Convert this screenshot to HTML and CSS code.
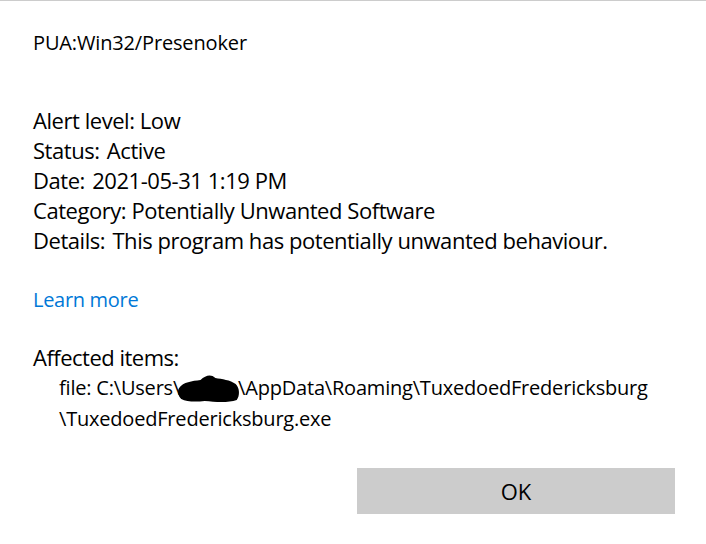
FILE: index.html
```html
<!DOCTYPE html>
<html lang="en">
<head>
  <meta charset="utf-8">
  <link rel="stylesheet" href="styles.css">
</head>
<body>
  <div class="dialog">
    <div class="threat-name">PUA:Win32/Presenoker</div>

    <div class="details">
      <div>Alert level: Low</div>
      <div><span class="label">Status:</span> Active</div>
      <div><span class="label">Date:</span> 2021-05-31 1:19 PM</div>
      <div>Category: Potentially Unwanted Software</div>
      <div><span class="label">Details:</span> This program has potentially unwanted behaviour.</div>
    </div>

    <a class="learn-more" href="#">Learn more</a>

    <div class="affected">
      <div>Affected items:</div>
      <div class="item">
        <div>file: C:\Users\<svg class="redact" viewBox="0 0 60 32" width="64" height="32" preserveAspectRatio="none"><path d="M2 16 C6 10 14 9 22 8 C27 3 32 2 36 6 C42 7 50 8 55 12 C59 16 59 24 56 28 C48 31 36 30 26 29 C18 30 9 30 4 27 C1 24 0 19 2 16 Z" fill="#000"/></svg>\AppData\Roaming\TuxedoedFredericksburg</div>
        <div>\TuxedoedFredericksburg.exe</div>
      </div>
    </div>

    <div class="actions">
      <button class="ok-button" type="button">OK</button>
    </div>
  </div>
</body>
</html>
```

FILE: styles.css
```css
body {
  margin: 0;
  background: #fff;
  font-family: "Open Sans", "Noto Sans", sans-serif;
  color: #000;
}
.dialog {
  border-top: 1px solid #cccccc;
  height: 543px;
  padding: 0 31px 0 33px;
}
.threat-name {
  font-size: 20px;
  margin-top: 29px;
  line-height: 26px;
  letter-spacing: -0.15px;
}
.details {
  margin-top: 49px;
  font-size: 22px;
  line-height: 30px;
  letter-spacing: -0.45px;
}
.label {
  margin-right: 2px;
}
.learn-more {
  display: block;
  margin-top: 30px;
  font-size: 20px;
  line-height: 30px;
  color: #0078d7;
  text-decoration: none;
  letter-spacing: -0.3px;
}
.affected {
  margin-top: 27px;
  font-size: 22px;
  line-height: 30px;
  letter-spacing: -0.5px;
}
.item {
  padding-left: 26px;
  font-size: 20px;
  line-height: 29px;
  letter-spacing: -0.2px;
  white-space: nowrap;
}
.redact {
  vertical-align: -9px;
  margin: 0 -3px 0 -3px;
}
.actions {
  display: flex;
  justify-content: flex-end;
  margin-top: 35px;
}
.ok-button {
  width: 318px;
  height: 46px;
  border: none;
  background: #cccccc;
  font-family: inherit;
  font-size: 22px;
  color: #000;
}
```
